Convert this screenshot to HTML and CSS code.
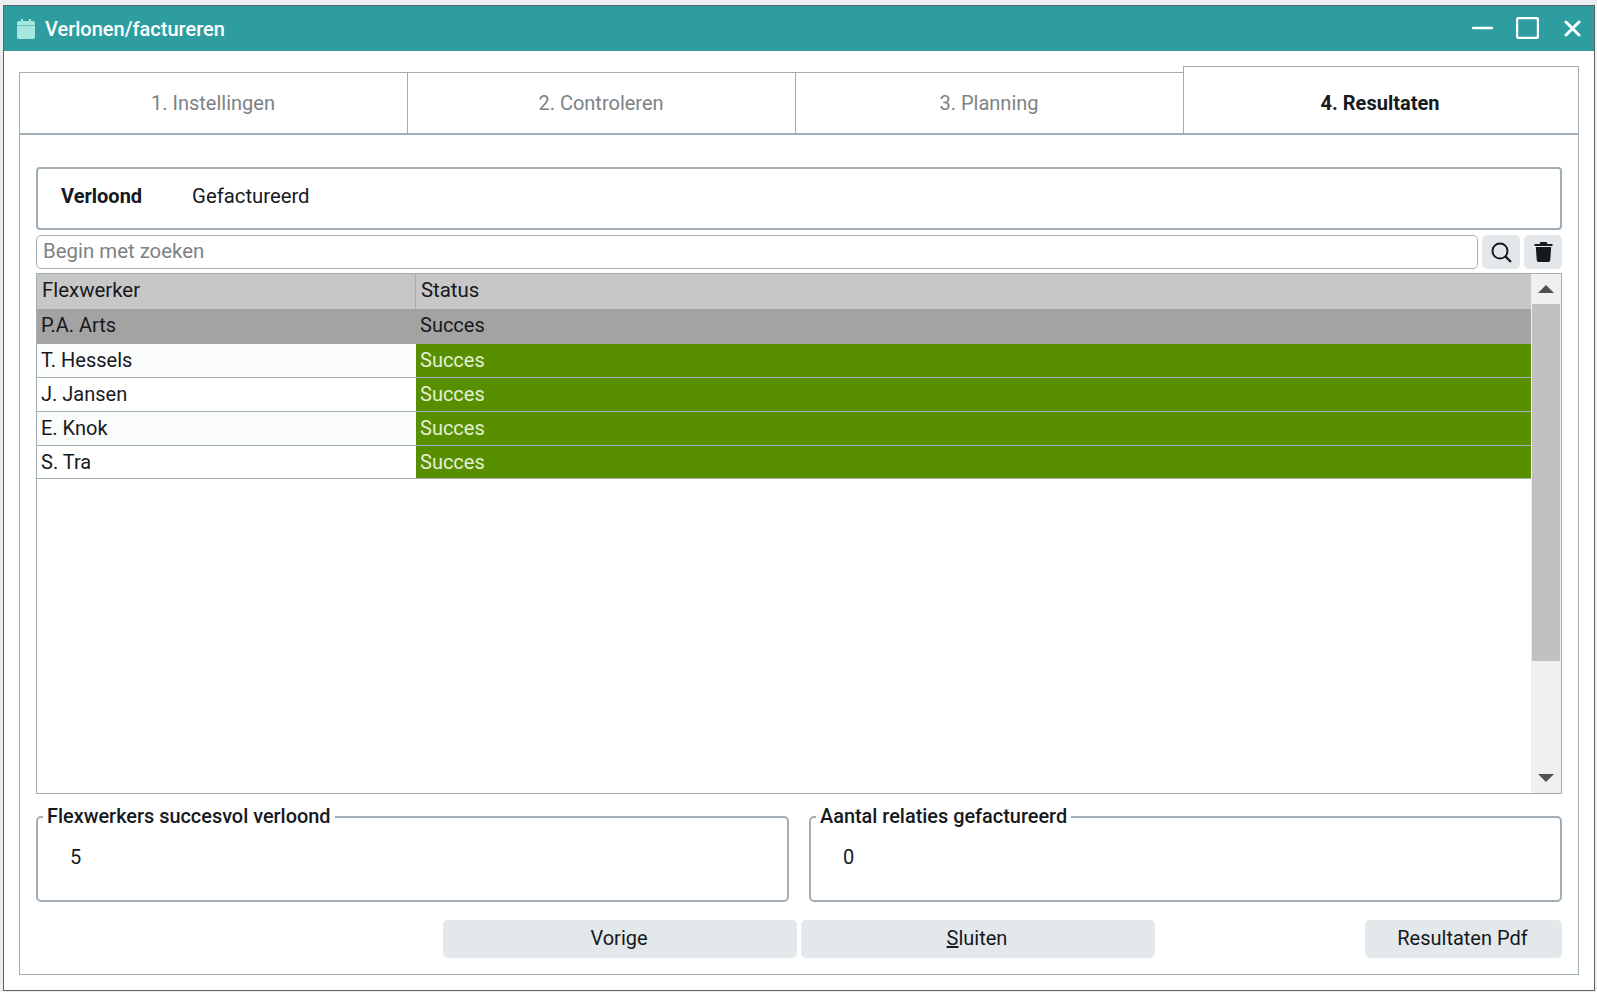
FILE: index.html
```html
<!DOCTYPE html>
<html lang="nl">
<head>
<meta charset="utf-8">
<title>Verlonen/factureren</title>
<link rel="stylesheet" href="styles.css">
</head>
<body>
<div class="window">
  <header class="titlebar">
    <svg class="cal" viewBox="0 0 18 20" width="18" height="20"><path d="M0 6.500h18V18a2 2 0 0 1-2 2H2a2 2 0 0 1-2-2zM2 2h2V0h2v2h6V0h2v2h2a2 2 0 0 1 2 2v2H0V4a2 2 0 0 1 2-2z"/></svg>
    <span class="title">Verlonen/factureren</span>
    <div class="winctl">
      <svg width="21" height="22" viewBox="0 0 21 22"><path d="M1 11h19" class="ws"/></svg>
      <svg class="maxi" width="23" height="22" viewBox="0 0 23 22"><rect x="1" y="1" width="21" height="20" rx="2" class="ws"/></svg>
      <svg width="17" height="17" viewBox="0 0 17 17"><path d="M2 2l13 13M15 2L2 15" class="ws xs"/></svg>
    </div>
  </header>
  <div class="body">
    <nav class="tabs">
      <div class="tab">1. Instellingen</div>
      <div class="tab">2. Controleren</div>
      <div class="tab">3. Planning</div>
      <div class="tab active">4. Resultaten</div>
    </nav>
    <main class="content">
      <div class="subtabs"><span class="sub on">Verloond</span><span class="sub">Gefactureerd</span></div>
      <div class="search">
        <input class="input" type="text" placeholder="Begin met zoeken">
        <button class="iconbtn"><svg width="21" height="21" viewBox="0 0 21 21"><circle cx="9" cy="9" r="7.500" fill="none" stroke="#16191d" stroke-width="1.900"/><path d="M14.400 14.400l5.600 5.600" stroke="#16191d" stroke-width="2.200"/></svg></button>
        <button class="iconbtn"><svg width="19" height="20" viewBox="0 0 18 20"><path d="M6 0h6l1 2h5v2H0V2h5zM1.300 5h15.400l-1 13.500a1.600 1.600 0 0 1-1.600 1.500H3.900a1.600 1.600 0 0 1-1.600-1.500z" fill="#16191d"/></svg></button>
      </div>
      <div class="grid">
        <div class="gridmain">
          <div class="row head"><div class="c1">Flexwerker</div><div class="c2">Status</div></div>
          <div class="row sel"><div class="c1">P.A. Arts</div><div class="c2">Succes</div></div>
          <div class="row alt"><div class="c1">T. Hessels</div><div class="c2 ok">Succes</div></div>
          <div class="row"><div class="c1">J. Jansen</div><div class="c2 ok">Succes</div></div>
          <div class="row alt"><div class="c1">E. Knok</div><div class="c2 ok">Succes</div></div>
          <div class="row last"><div class="c1">S. Tra</div><div class="c2 ok">Succes</div></div>
        </div>
        <div class="scroll">
          <div class="arrow"><span class="up"></span></div>
          <div class="thumb"></div>
          <div class="track"></div>
          <div class="arrow"><span class="down"></span></div>
        </div>
      </div>
      <div class="groups">
        <fieldset class="group"><legend>Flexwerkers succesvol verloond</legend><div class="val">5</div></fieldset>
        <fieldset class="group"><legend>Aantal relaties gefactureerd</legend><div class="val">0</div></fieldset>
      </div>
      <div class="actions">
        <button class="btn wide">Vorige</button>
        <button class="btn wide"><u>S</u>luiten</button>
        <button class="btn pdf">Resultaten Pdf</button>
      </div>
    </main>
  </div>
</div>
</body>
</html>
```
FILE: styles.css
```css
* { box-sizing: border-box; }
html, body { margin: 0; height: 100%; }
body {
  background: #ecedf1;
  padding: 5px 2px 1px 3px;
  font-family: Roboto, "Liberation Sans", sans-serif;
  font-size: 20px;
  color: #16191d;
  overflow: hidden;
}
.window {
  height: 986px;
  background: #fff;
  border: 1px solid #5f6366;
  display: flex;
  flex-direction: column;
}
.titlebar {
  height: 45px;
  background: #2e9da0;
  display: flex;
  align-items: center;
  padding: 0 13px;
  flex: none;
}
.cal { fill: #a5e6de; margin-right: 10px; }
.title { color: #fff; font-weight: 500; font-size: 20px; }
.winctl { margin-left: auto; display: flex; align-items: center; gap: 23px; margin-bottom: 1px; }
.winctl svg { display: block; }
.winctl .maxi { margin-right: 2px; }
.ws { fill: none; stroke: #fff; stroke-width: 2.400; stroke-linecap: round; }
.xs { stroke-width: 3; }
.body { flex: 1; padding: 15px; display: flex; flex-direction: column; min-height: 0; }
.tabs { display: flex; height: 69px; align-items: flex-end; flex: none; position: relative; z-index: 1; }
.tab {
  width: 388px;
  height: 63px;
  border: 1px solid #a2aeb5;
  border-right: 0;
  border-bottom: 2px solid #a2aeb5;
  display: flex;
  align-items: center;
  justify-content: center;
  color: #7d8286;
  font-size: 20px;
  background: #fff;
  padding-right: 1px;
}
.tab.active {
  flex: 1;
  height: 69px;
  border-right: 1px solid #a2aeb5;
  color: #16191d;
  font-weight: 700;
  padding: 6px 2px 0 0;
}
.content {
  flex: 1;
  min-height: 0;
  border: 1px solid #a2aeb5;
  border-top: 0;
  padding: 32px 16px 15px 16px;
  display: flex;
  flex-direction: column;
}
.subtabs {
  height: 63px;
  border: 2px solid #a2aeb5;
  border-radius: 4px;
  display: flex;
  align-items: center;
  padding: 0 0 5px 23px;
  gap: 50px;
  flex: none;
}
.sub { font-size: 20.300px; }
.sub.on { font-weight: 700; font-size: 20px; }
.search { display: flex; gap: 4px; margin-top: 5px; height: 34px; flex: none; }
.input {
  flex: 1;
  min-width: 0;
  border: 1px solid #a2aeb5;
  border-radius: 5px;
  padding: 0 6px 2px;
  font: 20.400px Roboto, "Liberation Sans", sans-serif;
  color: #16191d;
  outline: none;
}
.input::placeholder { color: #7d8286; opacity: 1; }
.iconbtn {
  width: 38px;
  border: 0;
  border-radius: 5px;
  background: #e3e8ea;
  padding: 0;
  display: flex;
  align-items: center;
  justify-content: center;
}
.grid {
  margin-top: 4px;
  height: 521px;
  flex: none;
  border: 1px solid #a2aeb5;
  display: flex;
}
.gridmain { flex: 1; min-width: 0; }
.row { display: flex; height: 34px; border-bottom: 1px solid #a2aeb5; line-height: 32px; }
.row.last { height: 33px; }
.c1 { width: 379px; padding-left: 4px; flex: none; }
.c2 { flex: 1; padding-left: 4px; }
.row.alt .c1 { background: #f9fcfb; }
.row.head { height: 35px; background: #c7c7c7; line-height: 33px; border-bottom: 0; font-size: 20.400px; }
.row.head .c1 { padding-left: 5px; border-right: 1px solid #a2aeb5; }
.row.head .c2 { padding-left: 5px; }
.row.sel { background: #a3a3a3; height: 35px; line-height: 33px; border-bottom: 1px solid #a3a3a3; }
.c2.ok { background: #588f00; color: #e4efd5; }
.scroll { width: 30px; flex: none; background: #f0f0f0; display: flex; flex-direction: column; }
.arrow { height: 30px; flex: none; display: flex; align-items: center; justify-content: center; }
.up { border: 8px solid transparent; border-top: 0; border-bottom: 8px solid #505050; }
.down { border: 8px solid transparent; border-bottom: 0; border-top: 8px solid #505050; }
.thumb { height: 357px; background: #c0c0c0; flex: none; margin: 0 1px; }
.track { flex: 1; }
.groups { display: flex; gap: 20px; margin-top: 11px; flex: none; }
.group {
  flex: 1;
  min-width: 0;
  margin: 0;
  height: 97px;
  padding: 0 5px;
  border: 2px solid #a2aeb5;
  border-radius: 5px;
}
.group legend { padding: 0 4px; font-weight: 500; font-size: 19.900px; line-height: 23px; }
.val { padding: 17px 0 0 27px; line-height: 24px; }
.actions { display: flex; margin-top: 18px; height: 38px; flex: none; padding-left: 407px; }
.btn {
  border: 0;
  border-radius: 5px;
  background: #e3e8ea;
  font: 20px Roboto, "Liberation Sans", sans-serif;
  color: #16191d;
  padding: 0 2px 2px 0;
}
.wide { width: 354px; margin-right: 4px; }
.pdf { width: 197px; margin-left: auto; }
```
